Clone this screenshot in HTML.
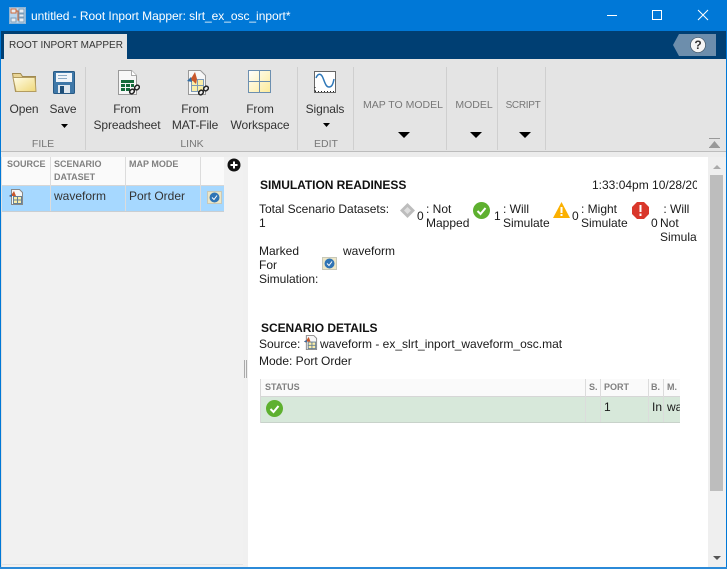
<!DOCTYPE html>
<html><head><meta charset="utf-8"><style>
html,body{margin:0;padding:0}
body{width:727px;height:569px;overflow:hidden;position:relative;background:#f0f0f0;font-family:"Liberation Sans",sans-serif;color:#222}
div,span,svg{position:absolute;white-space:nowrap}
.t{font-size:12px;line-height:14px;color:#1a1a1a}
.r{font-size:12px;line-height:16px;color:#333;text-align:center;letter-spacing:-.1px}
.g{font-size:10.5px;line-height:13px;color:#777;text-align:center}
.d{font-size:10.5px;line-height:13px;color:#777;text-align:center}
.sep{top:67px;width:1px;height:83px;background:#cfcfcf}
.hd{font-size:9px;font-weight:bold;color:#808080;line-height:13px}
.b{font-size:12px;font-weight:bold;color:#111;line-height:14px;letter-spacing:-.04px}
</style></head><body>
<div style="left:0;top:0;width:727px;height:31px;background:#0078d7"></div>
<svg style="left:9px;top:7px" width="17" height="17" viewBox="0 0 17 17"><rect x="0.5" y="0.5" width="16" height="16" fill="#b9d6ee" stroke="#8fb5d6"/><rect x="2" y="2" width="5" height="4" fill="#e8edf2" stroke="#d06a3a"/><rect x="10" y="2" width="5" height="4" fill="#e8edf2" stroke="#7a9dbb"/><rect x="10" y="7" width="5" height="3" fill="#e8edf2" stroke="#7a9dbb"/><rect x="2" y="11" width="5" height="4" fill="#e8edf2" stroke="#7a9dbb"/><rect x="10" y="11" width="5" height="4" fill="#e8edf2" stroke="#7a9dbb"/><path d="M7 4h2v9h1" fill="none" stroke="#c9622f"/></svg>
<div style="left:31px;top:8px;font-size:12px;line-height:16px;color:#fff;letter-spacing:-.04px">untitled - Root Inport Mapper: slrt_ex_osc_inport*</div>
<svg style="left:600px;top:0" width="127" height="31" viewBox="0 0 127 31" fill="none" stroke="#fff"><path d="M7 15.500h10"/><rect x="52.500" y="10.500" width="9" height="9"/><path d="M98 10l10 10M108 10l-10 10"/></svg>

<div style="left:0;top:31px;width:727px;height:28px;background:#003f73"></div>
<div style="left:4px;top:34px;width:123px;height:25px;background:#e4e4e4"></div>
<div style="left:9px;top:39px;font-size:10px;line-height:13px;color:#333">ROOT INPORT MAPPER</div>
<svg style="left:673px;top:34px" width="44" height="22" viewBox="0 0 44 22"><path d="M6 0H43V22H6L0 11z" fill="#6d8eac"/><circle cx="25" cy="11" r="7.500" fill="#f6f6f6"/><circle cx="25" cy="11" r="7.500" fill="none" stroke="#3a4a58" stroke-width=".6"/></svg>
<div style="left:692px;top:38px;width:12px;text-align:center;font-size:12px;line-height:14px;font-weight:bold;color:#333">?</div>

<div style="left:1px;top:59px;width:725px;height:92px;background:#e4e4e4"></div>
<div style="left:1px;top:151px;width:725px;height:1px;background:#bcbcbc"></div>
<div style="left:1px;top:152px;width:725px;height:5px;background:#ececec"></div>
<div class="sep" style="left:85px"></div><div class="sep" style="left:297px"></div><div class="sep" style="left:353px"></div><div class="sep" style="left:446px"></div><div class="sep" style="left:497px"></div><div class="sep" style="left:545px"></div>

<svg style="left:12px;top:72px" width="25" height="21" viewBox="0 0 25 21"><defs><linearGradient id="f" x1="0" y1="0" x2="1" y2="1"><stop offset="0" stop-color="#fffde8"/><stop offset="1" stop-color="#efd778"/></linearGradient></defs><path d="M.5 1.500h8l2 3h13v15H3.500z" fill="#e9d596" stroke="#a08a50"/><path d="M1 5.500h22l1 14H4z" fill="url(#f)" stroke="#b39c60"/></svg>
<svg style="left:53px;top:71px" width="23" height="23" viewBox="0 0 23 23"><rect x=".5" y=".5" width="21" height="22" rx="1" fill="#3f78a8" stroke="#285a85"/><rect x="3" y="2" width="16" height="9" fill="#f1f5f9"/><path d="M5 4.500h9M5 7.500h9" stroke="#8aa9c4"/><rect x="5" y="14" width="12" height="8" fill="#dfe7ee"/><rect x="7" y="15" width="4" height="7" fill="#1f4f78"/></svg>
<svg style="left:118px;top:70px" width="22" height="26" viewBox="0 0 22 26"><path d="M.5.500h13l5 5v19H.5z" fill="#f7f7f7" stroke="#999"/><path d="M13.500.500v5h5" fill="#fff" stroke="#aaa"/><rect x="3" y="10" width="13" height="3" fill="#146b3a"/><path d="M3 14h4v3H3zM8 14h4v3H8zM13 14h3v3h-3zM3 18h4v3H3zM8 18h4v3H8z" fill="#146b3a"/><path d="M14 22l5-5" stroke="#222" stroke-width="2" fill="none"/><rect x="11.500" y="19.500" width="5" height="4" rx="2" transform="rotate(-45 14 21.500)" fill="#eee" stroke="#222" stroke-width="1.500"/><rect x="16.500" y="15.500" width="5" height="4" rx="2" transform="rotate(-45 19 17.500)" fill="#eee" stroke="#222" stroke-width="1.500"/></svg>
<svg style="left:186px;top:70px" width="23" height="26" viewBox="0 0 23 26"><path d="M2.500.500h12l5 5v19h-17z" fill="#f7f7f7" stroke="#999"/><rect x="5.500" y="9.500" width="12" height="12" fill="#fbeea8" stroke="#7d9ab5"/><path d="M11.500 9v13M5 15.500h13" stroke="#7d9ab5"/><path d="M3 10l3-3 3-5 2 7-1 5-3-3z" fill="#c8572b"/><path d="M1 11l4-4 1 5z" fill="#2f6da6"/><rect x="12.500" y="20.500" width="5" height="4" rx="2" transform="rotate(-45 15 22.500)" fill="#eee" stroke="#222" stroke-width="1.500"/><rect x="17.500" y="16.500" width="5" height="4" rx="2" transform="rotate(-45 20 18.500)" fill="#eee" stroke="#222" stroke-width="1.500"/></svg>
<svg style="left:248px;top:70px" width="23" height="23" viewBox="0 0 23 23"><defs><linearGradient id="w" x1="0" y1="0" x2="1" y2="1"><stop offset="0" stop-color="#fff"/><stop offset="1" stop-color="#fdeb97"/></linearGradient></defs><rect x=".5" y=".5" width="22" height="22" fill="url(#w)" stroke="#6c8fb0"/><path d="M11.500 1v21M1 11.500h21" stroke="#6c8fb0"/></svg>
<svg style="left:314px;top:71px" width="22" height="22" viewBox="0 0 22 22"><rect x=".5" y=".5" width="21" height="21" fill="#fff" stroke="#666"/><path d="M2 7C4 2 7 2 9 7s3 9 6 9 4-3 5-8" fill="none" stroke="#2f78b8" stroke-width="1.500"/><path d="M1 20.500h20M1 16v5" stroke="#222" stroke-dasharray="1 2" fill="none"/></svg>

<div class="r" style="left:4px;top:101px;width:40px">Open</div>
<div class="r" style="left:43px;top:101px;width:40px">Save</div>
<div class="r" style="left:107px;top:101px;width:40px">From</div>
<div class="r" style="left:88px;top:117px;width:78px">Spreadsheet</div>
<div class="r" style="left:175px;top:101px;width:40px">From</div>
<div class="r" style="left:165px;top:117px;width:60px">MAT-File</div>
<div class="r" style="left:240px;top:101px;width:40px">From</div>
<div class="r" style="left:225px;top:117px;width:70px">Workspace</div>
<div class="r" style="left:300px;top:101px;width:50px">Signals</div>
<div class="g" style="left:23px;top:138px;width:40px">FILE</div>
<div class="g" style="left:172px;top:138px;width:40px">LINK</div>
<div class="g" style="left:306px;top:138px;width:40px">EDIT</div>
<div class="d" style="left:356px;top:99px;width:94px">MAP TO MODEL</div>
<div class="d" style="left:449px;top:99px;width:50px">MODEL</div>
<div class="d" style="left:499px;top:99px;width:48px;font-size:10px;letter-spacing:-.3px">SCRIPT</div>
<svg style="left:0;top:0" width="727" height="152"><path d="M61 124h7l-3.500 4zM323 123h7l-3.500 4zM398 132h12l-6 6zM470 132h12l-6 6zM519 132h12l-6 6z" fill="#000"/><path d="M709 138h11v1h-11zM714.500 141l5 6h-10z" fill="#999"/><path d="M709 147h11v1h-11z" fill="#999"/></svg>

<!-- Left panel -->
<div style="left:1px;top:157px;width:242px;height:410px;background:#f1f1f1"></div>
<div style="left:1px;top:157px;width:1px;height:410px;background:#e0e0e0"></div>
<div style="left:2px;top:157px;width:222px;height:28px;background:#fafafa"></div>
<div style="left:2px;top:186px;width:222px;height:25px;background:#a6d8ff"></div>
<div style="left:2px;top:185px;width:222px;height:1px;background:#d6d6d6"></div>
<div style="left:2px;top:211px;width:222px;height:1px;background:#c9ced2"></div>
<div style="left:50px;top:157px;width:1px;height:54px;background:#dcdcdc"></div>
<div style="left:125px;top:157px;width:1px;height:54px;background:#dcdcdc"></div>
<div style="left:200px;top:157px;width:1px;height:54px;background:#dcdcdc"></div>
<div class="hd" style="left:7px;top:158px">SOURCE</div>
<div class="hd" style="left:54px;top:158px">SCENARIO<br>DATASET</div>
<div class="hd" style="left:129px;top:158px">MAP MODE</div>
<svg style="left:9px;top:189px" width="15" height="17" viewBox="0 0 15 17"><path d="M2.500.500h8l3 3v12h-11z" fill="#f7f7f7" stroke="#888"/><rect x="4.500" y="7.500" width="8" height="7" fill="#fbeea8" stroke="#667f96"/><path d="M8.500 7v8M4 11h9" stroke="#667f96"/><path d="M0 7l3-2 2-3 2 5H3L2 8z" fill="#c8572b"/><path d="M0 7l3-2 0 3z" fill="#2f6da6"/></svg>
<div class="t" style="left:54px;top:189px;color:#333">waveform</div>
<div class="t" style="left:129px;top:189px;color:#333">Port Order</div>
<svg style="left:207px;top:191px" width="15" height="13" viewBox="0 0 15 13"><rect x=".5" y=".5" width="14" height="12" fill="#ece6c6" stroke="#c8c8b8"/><circle cx="7.500" cy="6.500" r="5" fill="#2f74b5"/><path d="M5 6.500l2 2 3-4" stroke="#fff" fill="none"/></svg>
<svg style="left:227px;top:158px" width="14" height="14" viewBox="0 0 14 14"><circle cx="7" cy="7" r="6.500" fill="#111"/><path d="M3.500 7h7M7 3.500v7" stroke="#fff" stroke-width="2"/></svg>
<svg style="left:243px;top:360px" width="5" height="18"><path d="M1.500 0v18M3.500 0v18" stroke="#aaa"/></svg>
<div style="left:1px;top:564px;width:242px;height:1px;background:#e3e3e3"></div>

<!-- Right panel -->
<div style="left:248px;top:157px;width:460px;height:410px;background:#fff"></div>
<div style="left:708px;top:157px;width:15px;height:410px;background:#efefef"></div>
<div style="left:710px;top:175px;width:13px;height:316px;background:#bdbdbd"></div>
<svg style="left:708px;top:157px" width="15" height="410"><path d="M5 12l4-4 4 4z" fill="#aaa"/><path d="M5 399h8l-4 4z" fill="#555"/></svg>

<div class="b" style="left:260px;top:178px">SIMULATION READINESS</div>
<div class="t" style="left:592px;top:178px;width:105px;overflow:hidden">1:33:04pm 10/28/20</div>
<div class="t" style="left:259px;top:202px;line-height:14px">Total Scenario Datasets:<br>1</div>
<svg style="left:400px;top:203px" width="15" height="15" viewBox="0 0 15 15"><path d="M7.500 0L15 7.500 7.500 15 0 7.500z" fill="#bdbdbd"/><path d="M7.500 4L11 7.500 7.500 11 4 7.500z" fill="#dedede"/></svg>
<div class="t" style="left:417px;top:209px">0</div>
<div class="t" style="left:426px;top:202px">: Not<br>Mapped</div>
<svg style="left:473px;top:202px" width="17" height="17" viewBox="0 0 17 17"><circle cx="8.500" cy="8.500" r="8.500" fill="#5eb02f"/><path d="M4.500 9l3 3 5-6" stroke="#fff" stroke-width="2" fill="none"/></svg>
<div class="t" style="left:494px;top:209px">1</div>
<div class="t" style="left:503px;top:202px">: Will<br>Simulate</div>
<svg style="left:553px;top:202px" width="17" height="16" viewBox="0 0 17 16"><path d="M8.500 0L17 16H0z" fill="#fbb000"/><path d="M8.500 5v6M8.500 12v2" stroke="#fff" stroke-width="2"/></svg>
<div class="t" style="left:572px;top:209px">0</div>
<div class="t" style="left:581px;top:202px">: Might<br>Simulate</div>
<svg style="left:632px;top:202px" width="17" height="17" viewBox="0 0 17 17"><path d="M5 0h7l5 5v7l-5 5H5l-5-5V5z" fill="#d9372b"/><path d="M8.500 3v7M8.500 11.500v2.500" stroke="#fff" stroke-width="2"/></svg>
<div class="t" style="left:651px;top:216px">0</div>
<div class="t" style="left:660px;top:202px;width:37px;overflow:hidden">&nbsp;: Will<br>Not<br>Simulate</div>
<div class="t" style="left:259px;top:244px">Marked<br>For<br>Simulation:</div>
<svg style="left:322px;top:257px" width="15" height="13" viewBox="0 0 15 13"><rect x=".5" y=".5" width="14" height="12" fill="#ece6c6" stroke="#c8c8b8"/><circle cx="7.500" cy="6.500" r="5" fill="#2f74b5"/><path d="M5 6.500l2 2 3-4" stroke="#fff" fill="none"/></svg>
<div class="t" style="left:343px;top:244px">waveform</div>

<div class="b" style="left:261px;top:321px">SCENARIO DETAILS</div>
<div class="t" style="left:259px;top:337px">Source:</div>
<svg style="left:304px;top:335px" width="14" height="16" viewBox="0 0 15 17"><path d="M2.500.500h8l3 3v12h-11z" fill="#f7f7f7" stroke="#888"/><rect x="4.500" y="7.500" width="8" height="7" fill="#fbeea8" stroke="#667f96"/><path d="M8.500 7v8M4 11h9" stroke="#667f96"/><path d="M0 7l3-2 2-3 2 5H3L2 8z" fill="#c8572b"/><path d="M0 7l3-2 0 3z" fill="#2f6da6"/></svg>
<div class="t" style="left:320px;top:337px">waveform - ex_slrt_inport_waveform_osc.mat</div>
<div class="t" style="left:259px;top:354px">Mode: Port Order</div>

<div style="left:260px;top:379px;width:420px;height:17px;background:#fafafa"></div>
<div style="left:260px;top:396px;width:420px;height:1px;background:#d6d6d6"></div>
<div style="left:260px;top:397px;width:420px;height:25px;background:#d7e8da"></div>
<div style="left:260px;top:422px;width:420px;height:1px;background:#c8d2ca"></div>
<div style="left:260px;top:379px;width:1px;height:44px;background:#d8d8d8"></div>
<div style="left:585px;top:379px;width:1px;height:43px;background:#dcdcdc"></div>
<div style="left:600px;top:379px;width:1px;height:43px;background:#dcdcdc"></div>
<div style="left:648px;top:379px;width:1px;height:43px;background:#dcdcdc"></div>
<div style="left:663px;top:379px;width:1px;height:43px;background:#dcdcdc"></div>
<div class="hd" style="left:265px;top:381px">STATUS</div>
<div class="hd" style="left:589px;top:381px">S.</div>
<div class="hd" style="left:604px;top:381px">PORT</div>
<div class="hd" style="left:651px;top:381px">B.</div>
<div class="hd" style="left:667px;top:381px">M.</div>
<svg style="left:266px;top:400px" width="17" height="17" viewBox="0 0 17 17"><circle cx="8.500" cy="8.500" r="8.500" fill="#5eb02f"/><path d="M4.500 9l3 3 5-6" stroke="#fff" stroke-width="2" fill="none"/></svg>
<div class="t" style="left:604px;top:400px">1</div>
<div class="t" style="left:652px;top:400px">In</div>
<div class="t" style="left:667px;top:400px;width:13px;overflow:hidden">wa</div>

<!-- Window border -->
<div style="left:0;top:0;width:1px;height:569px;background:#0078d7"></div>
<div style="left:726px;top:0;width:1px;height:569px;background:#0078d7"></div>
<div style="left:0;top:567px;width:727px;height:2px;background:#2b8ad8"></div>
</body></html>
